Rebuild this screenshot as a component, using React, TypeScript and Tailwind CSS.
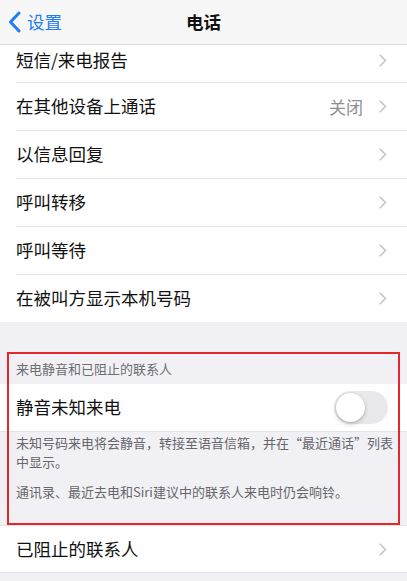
import React from 'react';

const font = { fontFamily: '"Noto Sans CJK SC", "Noto Sans", sans-serif' };

function Chevron() {
  return (
    <svg width="8" height="13" viewBox="0 0 8 13" fill="none" className="shrink-0">
      <path d="M1.2 1.2L6.5 6.5L1.2 11.8" stroke="#c4c4c8" strokeWidth="1.6" strokeLinecap="round" strokeLinejoin="round" />
    </svg>
  );
}

function Row({ label, value, last, h = 'h-[48px]', shift = '' }: { label: string; value?: string; last?: boolean; h?: string; shift?: string }) {
  return (
    <div className={`bg-white pl-4 ${h}`}>
      <div className={`flex h-full items-center pr-[20px] ${last ? '' : 'border-b border-[#e4e4e6]'} ${shift}`}>
        <span className="flex-1 text-[17.5px] text-[#111]">{label}</span>
        {value && <span className="mr-[16px] text-[17px] text-[#8e8e93]">{value}</span>}
        <Chevron />
      </div>
    </div>
  );
}

export default function App() {
  return (
    <div className="relative h-[581px] w-[407px] overflow-hidden bg-[#f1f1f5]" style={font}>
      {/* nav bar */}
      <div className="relative flex h-[45px] items-center border-b border-[#dcdcde] bg-[#f7f7f7]">
        <div className="flex items-center pl-[8px] text-[#1d7ef5]">
          <svg width="13" height="22" viewBox="0 0 13 22" fill="none">
            <path d="M11 2L2.5 11L11 20" stroke="#1d7ef5" strokeWidth="3" strokeLinecap="round" strokeLinejoin="round" />
          </svg>
          <span className="ml-[6px] text-[17.5px]">设置</span>
        </div>
        <span className="absolute left-1/2 -translate-x-1/2 text-[17.5px] font-semibold text-[#111]">电话</span>
      </div>

      <Row label="短信/来电报告" h="h-[38px]" shift="pb-[6px]" />
      <Row label="在其他设备上通话" value="关闭" />
      <Row label="以信息回复" />
      <Row label="呼叫转移" />
      <Row label="呼叫等待" />
      <Row label="在被叫方显示本机号码" last h="h-[47px]" />

      <div className="flex h-[62px] items-end px-4 pb-[6px] text-[13px] text-[#6d6d72]">来电静音和已阻止的联系人</div>

      <div className="flex h-[48px] items-center border-b border-[#e4e4e6] bg-white pl-4 pr-[19px]">
        <span className="flex-1 text-[17.5px] text-[#111]">静音未知来电</span>
        <div className="relative h-[33px] w-[54px] rounded-full bg-[#e9e9eb]">
          <div className="absolute left-[2px] top-[2px] h-[29px] w-[29px] rounded-full bg-white shadow-[0_2px_4px_rgba(0,0,0,0.22),0_0_1px_rgba(0,0,0,0.2)]" />
        </div>
      </div>

      <div className="h-[93px] whitespace-nowrap pl-4 pt-[1px] text-[13px] leading-[19px] text-[#66666b]">
        <p>未知号码来电将会静音，转接至语音信箱，并在“最近通话”列表<br />中显示。</p>
        <p className="mt-[11px]">通讯录、最近去电和Siri建议中的联系人来电时仍会响铃。</p>
      </div>

      <div className="border-t border-[#e4e4e6]">
        <Row label="已阻止的联系人" last h="h-[46px]" />
      </div>
      <div className="border-t border-[#e4e4e6]" />

      {/* red highlight box */}
      <div className="pointer-events-none absolute left-[7px] top-[352px] h-[173px] w-[393px] border-[2.5px] border-[#e5262d]" />
    </div>
  );
}
